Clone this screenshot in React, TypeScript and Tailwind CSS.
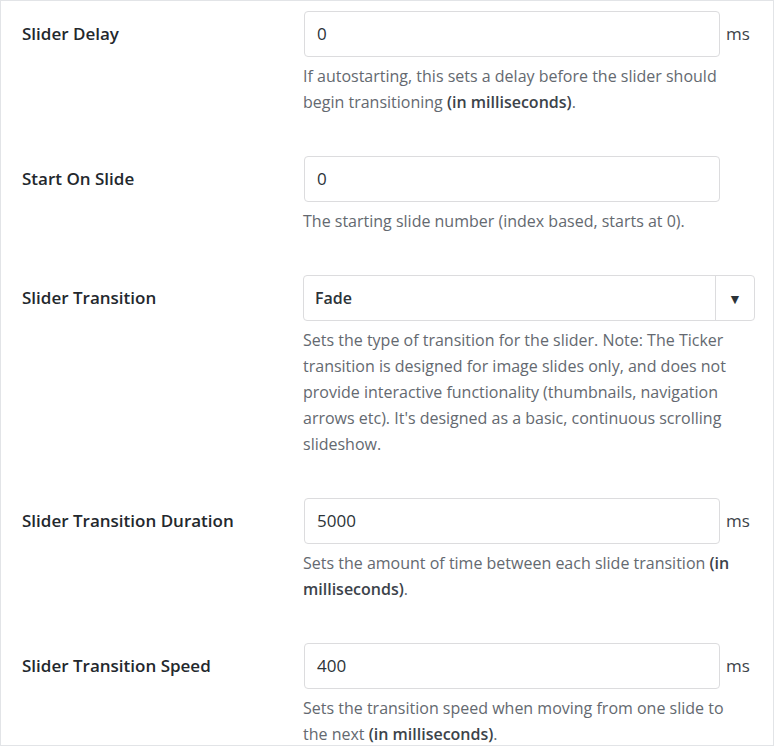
import React from "react"

type Row = {
  label: string
  value: string
  kind: "input" | "select"
  unit?: string
  desc: React.ReactNode
}

const rows: Row[] = [
  {
    label: "Slider Delay",
    value: "0",
    kind: "input",
    unit: "ms",
    desc: (
      <>
        If autostarting, this sets a delay before the slider should begin transitioning{" "}
        <strong className="font-semibold text-[#3c434a]">(in milliseconds)</strong>.
      </>
    ),
  },
  {
    label: "Start On Slide",
    value: "0",
    kind: "input",
    desc: <>The starting slide number (index based, starts at 0).</>,
  },
  {
    label: "Slider Transition",
    value: "Fade",
    kind: "select",
    desc: (
      <>
        Sets the type of transition for the slider. Note: The Ticker transition is designed for image slides
        only, and does not provide interactive functionality (thumbnails, navigation arrows etc). It's designed
        as a basic, continuous scrolling slideshow.
      </>
    ),
  },
  {
    label: "Slider Transition Duration",
    value: "5000",
    kind: "input",
    unit: "ms",
    desc: (
      <>
        Sets the amount of time between each slide transition{" "}
        <strong className="font-semibold text-[#3c434a]">(in milliseconds)</strong>.
      </>
    ),
  },
  {
    label: "Slider Transition Speed",
    value: "400",
    kind: "input",
    unit: "ms",
    desc: (
      <>
        Sets the transition speed when moving from one slide to the next{" "}
        <strong className="font-semibold text-[#3c434a]">(in milliseconds)</strong>.
      </>
    ),
  },
]

function Field({ row }: { row: Row }) {
  if (row.kind === "select") {
    return (
      <div className="flex h-[46px] w-[452px] items-stretch rounded-[4px] border border-[#dcdcde] bg-white">
        <div className="flex flex-1 items-center pl-[11px] text-[16px] font-semibold text-[#2c3338]">{row.value}</div>
        <div className="flex w-[39px] items-center justify-center border-l border-[#dcdcde] text-[14px] text-[#2c3338]">
          ▼
        </div>
      </div>
    )
  }
  return (
    <div className="flex items-center">
      <div className="ml-[1px] flex h-[46px] w-[416px] items-center rounded-[4px] border border-[#dcdcde] bg-white pl-[12px] text-[17px] text-[#2c3338]">
        {row.value}
      </div>
      {row.unit && <span className="ml-[6px] text-[17px] text-[#3c434a]">{row.unit}</span>}
    </div>
  )
}

export default function App() {
  return (
    <div className="h-[746px] w-[775px] overflow-hidden bg-white font-['Open_Sans',sans-serif]">
      <div className="flex h-full w-[774px] flex-col gap-y-[41px] border border-[#e2e4e7] pt-[10px]">
        {rows.map((row) => (
          <div key={row.label} className="flex">
            <div className="w-[302px] shrink-0 pl-[21px] text-[17px] font-semibold leading-[46px] text-[#23282d]">
              {row.label}
            </div>
            <div className="flex flex-col">
              <Field row={row} />
              <p className="mt-[6px] w-[445px] text-[16px] leading-[26px] text-[#646970]">{row.desc}</p>
            </div>
          </div>
        ))}
      </div>
    </div>
  )
}
